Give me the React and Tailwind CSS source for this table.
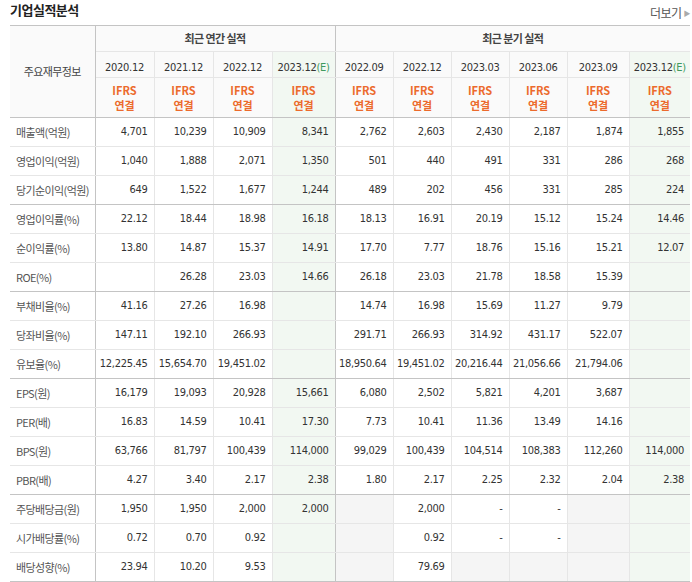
import React from 'react';

const annualCols = [
  { label: '2020.12' },
  { label: '2021.12' },
  { label: '2022.12' },
  { label: '2023.12', est: true },
];

const quarterCols = [
  { label: '2022.09' },
  { label: '2022.12' },
  { label: '2023.03' },
  { label: '2023.06' },
  { label: '2023.09' },
  { label: '2023.12', est: true },
];

// G = gray blank cell
const G = null;

const groups = [
  [
    ['매출액(억원)', ['4,701', '10,239', '10,909', '8,341', '2,762', '2,603', '2,430', '2,187', '1,874', '1,855']],
    ['영업이익(억원)', ['1,040', '1,888', '2,071', '1,350', '501', '440', '491', '331', '286', '268']],
    ['당기순이익(억원)', ['649', '1,522', '1,677', '1,244', '489', '202', '456', '331', '285', '224']],
  ],
  [
    ['영업이익률(%)', ['22.12', '18.44', '18.98', '16.18', '18.13', '16.91', '20.19', '15.12', '15.24', '14.46']],
    ['순이익률(%)', ['13.80', '14.87', '15.37', '14.91', '17.70', '7.77', '18.76', '15.16', '15.21', '12.07']],
    ['ROE(%)', ['', '26.28', '23.03', '14.66', '26.18', '23.03', '21.78', '18.58', '15.39', '']],
  ],
  [
    ['부채비율(%)', ['41.16', '27.26', '16.98', '', '14.74', '16.98', '15.69', '11.27', '9.79', '']],
    ['당좌비율(%)', ['147.11', '192.10', '266.93', '', '291.71', '266.93', '314.92', '431.17', '522.07', '']],
    ['유보율(%)', ['12,225.45', '15,654.70', '19,451.02', '', '18,950.64', '19,451.02', '20,216.44', '21,056.66', '21,794.06', '']],
  ],
  [
    ['EPS(원)', ['16,179', '19,093', '20,928', '15,661', '6,080', '2,502', '5,821', '4,201', '3,687', '']],
    ['PER(배)', ['16.83', '14.59', '10.41', '17.30', '7.73', '10.41', '11.36', '13.49', '14.16', '']],
    ['BPS(원)', ['63,766', '81,797', '100,439', '114,000', '99,029', '100,439', '104,514', '108,383', '112,260', '114,000']],
    ['PBR(배)', ['4.27', '3.40', '2.17', '2.38', '1.80', '2.17', '2.25', '2.32', '2.04', '2.38']],
  ],
  [
    ['주당배당금(원)', ['1,950', '1,950', '2,000', '2,000', G, '2,000', '-', '-', G, '']],
    ['시가배당률(%)', ['0.72', '0.70', '0.92', '', G, '0.92', '-', '-', G, '']],
    ['배당성향(%)', ['23.94', '10.20', '9.53', '', G, '79.69', G, G, G, '']],
  ],
];

const kr = "font-['Noto_Sans_CJK_KR',sans-serif]";
const num = "font-['DejaVu_Sans_Condensed','DejaVu_Sans','Noto_Sans_CJK_KR',sans-serif]";

const YearLabel = ({ col }) => (
  <span className={`${num} text-[11px] text-[#333] tracking-[-0.3px]`}>
    {col.label}
    {col.est && <span className="text-[#3f9a5e]">(E)</span>}
  </span>
);

const App = () => {
  const allCols = [...annualCols, ...quarterCols];

  const cellBg = (i, v) => {
    if (v === null) return 'bg-[#f5f5f5]';
    if (allCols[i].est) return 'bg-[#f2f8f2]';
    return 'bg-white';
  };

  const rightBorder = (i) =>
    i === 3 ? 'border-r border-r-[#c4c4c4]' : i === 9 ? '' : 'border-r border-r-[#e6e6e6]';

  return (
    <div className="w-[692px] h-[582px] overflow-hidden bg-white pl-[10px]">
      <div className="h-[25px] w-[680px] flex items-start justify-between">
        <h2 className={`${kr} text-[13px] font-bold text-[#222] tracking-[-0.5px] leading-[16px] pt-[2px]`}>
          기업실적분석
        </h2>
        <a className={`${kr} text-[12px] text-[#555] leading-[16px] pt-[5px] flex items-center gap-[2px] tracking-[-0.5px]`}>
          더보기
          <span className="text-[7px] text-[#aaa]">▶</span>
        </a>
      </div>

      <table className="w-[680px] table-fixed border-collapse border-t border-t-[#c4c4c4]">
        <colgroup>
          <col className="w-[85px]" />
          <col className="w-[59px]" />
          <col className="w-[59px]" />
          <col className="w-[59px]" />
          <col className="w-[63px]" />
          <col className="w-[58px]" />
          <col className="w-[58px]" />
          <col className="w-[58px]" />
          <col className="w-[58px]" />
          <col className="w-[62px]" />
          <col className="w-[61px]" />
        </colgroup>
        <thead>
          <tr className="h-[26px]">
            <th
              rowSpan={3}
              className={`${kr} bg-[#fafafa] text-[11px] font-normal text-[#444] tracking-[-0.6px] border-r border-r-[#c4c4c4] border-b border-b-[#c4c4c4]`}
            >
              주요재무정보
            </th>
            <th
              colSpan={4}
              className={`${kr} bg-[#fafafa] text-[11px] font-bold text-[#444] tracking-[-0.6px] border-r border-r-[#c4c4c4] border-b border-b-[#e6e6e6]`}
            >
              최근 연간 실적
            </th>
            <th
              colSpan={6}
              className={`${kr} bg-[#fafafa] text-[11px] font-bold text-[#444] tracking-[-0.6px] border-b border-b-[#e6e6e6]`}
            >
              최근 분기 실적
            </th>
          </tr>
          <tr className="h-[26px]">
            {allCols.map((col, i) => (
              <th
                key={i}
                className={`${col.est ? 'bg-[#f2f8f2]' : 'bg-[#fafafa]'} font-normal text-center ${rightBorder(i)} border-b border-b-[#e6e6e6]`}
              >
                <YearLabel col={col} />
              </th>
            ))}
          </tr>
          <tr className="h-[40px]">
            {allCols.map((col, i) => (
              <th
                key={i}
                className={`${col.est ? 'bg-[#f2f8f2]' : 'bg-[#fafafa]'} text-center ${rightBorder(i)} border-b border-b-[#c4c4c4]`}
              >
                <div className={`${kr} text-[11px] font-semibold text-[#ec6a2c] flex flex-col items-center`}>
                  <span className="block leading-[15px]">IFRS</span>
                  <span className="block leading-[15px]">연결</span>
                </div>
              </th>
            ))}
          </tr>
        </thead>
        <tbody>
          {groups.map((rows, g) =>
            rows.map(([label, values], r) => {
              const last = r === rows.length - 1;
              const bb = last ? 'border-b border-b-[#c4c4c4]' : 'border-b border-b-[#e6e6e6]';
              return (
                <tr key={`${g}-${r}`} className="h-[29px]">
                  <td
                    className={`${kr} bg-white text-[11px] text-[#555] tracking-[-0.6px] pl-[6px] text-left whitespace-nowrap border-r border-r-[#c4c4c4] ${bb}`}
                  >
                    {label}
                  </td>
                  {values.map((v, i) => (
                    <td
                      key={i}
                      className={`${num} ${cellBg(i, v)} text-[11px] text-[#333] tracking-[-0.3px] text-right pr-[6px] whitespace-nowrap ${rightBorder(i)} ${bb}`}
                    >
                      {v}
                    </td>
                  ))}
                </tr>
              );
            })
          )}
        </tbody>
      </table>
    </div>
  );
};

export default App;
